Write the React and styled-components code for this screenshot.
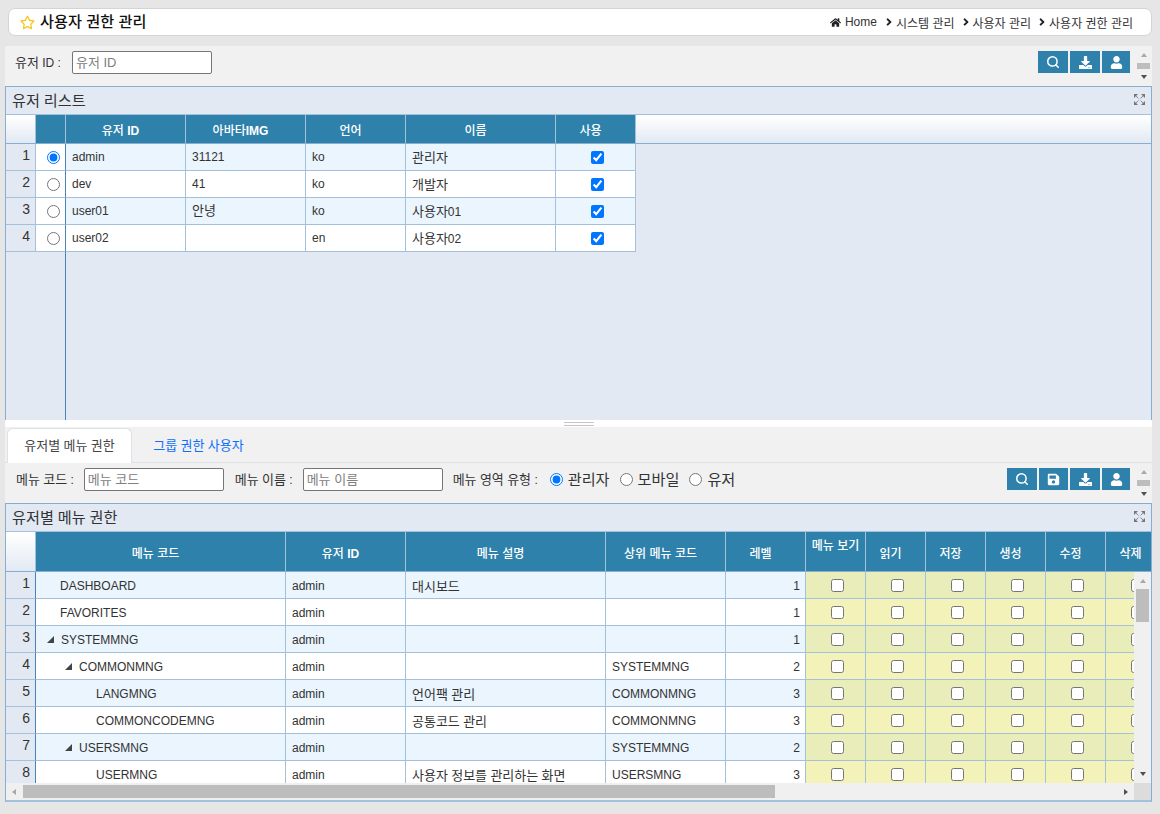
import React from 'react'
import styled, { createGlobalStyle } from 'styled-components'
import { FaHome, FaRegStar, FaDownload, FaUser, FaSave, FaAngleRight } from 'react-icons/fa'
import { FiSearch } from 'react-icons/fi'

const GlobalStyle = createGlobalStyle`
    html, body { margin: 0; padding: 0; height: 100%; overflow: hidden; }
    body {
        background: #e6e6e6;
        color: #333;
        font-family: "Liberation Sans", "Noto Sans CJK KR", sans-serif;
        font-size: 12px;
    }
    * { box-sizing: border-box; }
`

const Page = styled.div`
    width: 1160px;
    height: 814px;
    padding: 8px 8px 0 5px;
    display: flex;
    flex-direction: column;
`

const HangulRun = styled.span`
    font-size: 1.083em;
    line-height: 1;
`

// hangul in the original font runs wider than Noto at the same size
const T = ({ children }) => String(children).split(/([가-힣]+)/).map((part, i) => (
    i % 2 ? <HangulRun key={i}>{part}</HangulRun> : part
))

const TitleBar = styled.div`
    height: 28px;
    margin: 0 0 10px 3px;
    padding: 0 18px 0 11px;
    display: flex;
    align-items: center;
    justify-content: space-between;
    background: #fff;
    border: 1px solid #d4d4d4;
    border-radius: 7px;
`

const Title = styled.div`
    display: flex;
    align-items: center;
    gap: 5px;
    color: #111;
    font-size: 14px;
    font-weight: 500;
    word-spacing: 0.5px;
    svg { color: #f5c518; font-size: 15px; }
`

const Crumbs = styled.div`
    display: flex;
    align-items: center;
    color: #333;
    font-size: 12px;
`

const Crumb = styled.span`
    display: flex;
    align-items: center;
    margin-left: ${p => p.$first ? 0 : p.$wide ? '6px' : '5px'};
    svg { color: #222; font-size: ${p => p.$first ? '11px' : '12px'}; margin-right: ${p => p.$first ? '4px' : '1px'}; }
`

const SearchBar = styled.div`
    height: 40px;
    padding: 5px 1px 0 ${p => p.$left}px;
    display: flex;
    align-items: flex-start;
    background: #f1f1f1;
`

const FieldLabel = styled.label`
    height: 23px;
    line-height: 24px;
    margin-right: ${p => p.$gap || 10}px;
    white-space: nowrap;
    color: #333;
`

const TextBox = styled.input`
    width: 140px;
    height: 23px;
    margin-right: ${p => p.$gap || 11}px;
    padding: 0 3px;
    border: 1px solid #767676;
    border-radius: 2px;
    background: #fff;
    font-family: inherit;
    font-size: 13px;
    &::placeholder { color: #808080; }
`

const RadioLabel = styled.label`
    display: flex;
    align-items: center;
    height: 23px;
    margin-right: 10px;
    font-size: 14px;
    input { width: 13px; height: 13px; margin: 0 5px 0 0; }
`

const Spacer = styled.div`
    flex: 1;
`

const Buttons = styled.div`
    display: flex;
    gap: 2px;
`

const IconButton = styled.button`
    width: ${p => p.$w || 30}px;
    height: 22px;
    padding: 0;
    display: flex;
    align-items: center;
    justify-content: center;
    border: 0;
    background: #2e81ab;
    color: #fff;
    font-size: 13px;
`

const MiniScroll = styled.div`
    width: 13px;
    height: 26px;
    margin: 2px 1px 0 7px;
    display: flex;
    flex-direction: column;
    align-items: center;
    justify-content: space-between;
`

const MiniThumb = styled.div`
    width: 13px;
    height: 6px;
    background: #bdbdbd;
`

const Arrow = styled.i`
    width: 0;
    height: 0;
    border-style: solid;
    border-color: transparent;
    ${p => p.$dir === 'up' && `border-width: 0 3.5px 4px; border-bottom-color: ${p.$c};`}
    ${p => p.$dir === 'down' && `border-width: 4px 3.5px 0; border-top-color: ${p.$c};`}
    ${p => p.$dir === 'left' && `border-width: 3.5px 4px 3.5px 0; border-right-color: ${p.$c};`}
    ${p => p.$dir === 'right' && `border-width: 3.5px 0 3.5px 4px; border-left-color: ${p.$c};`}
`

const Panel = styled.div`
    height: ${p => p.$h}px;
    display: flex;
    flex-direction: column;
    border: 1px solid #87add3;
    border-bottom: ${p => p.$closed ? '2px solid #a4c1dc' : '0'};
    background: #e2e9f3;
    overflow: hidden;
`

const Caption = styled.div`
    flex: 0 0 28px;
    display: flex;
    align-items: center;
    justify-content: space-between;
    padding: 0 6px;
    background: #e2e9f3;
    color: #333;
    font-size: 14px;
    border-bottom: 1px solid #a4c1dc;
`

const Row = styled.div`
    flex: none;
    display: grid;
    width: max-content;
    grid-template-columns: ${p => p.$cols};
    height: ${p => p.$h}px;
`

const HeadWrap = styled.div`
    display: flex;
    flex: 0 0 ${p => p.$h}px;
    overflow: hidden;
    background: linear-gradient(#fff, #e2e9f3);
    border-bottom: 1px solid #87add3;
`

const Corner = styled.div`
    border-right: 1px solid #a4c1dc;
    background: linear-gradient(#fff, #e2e9f3);
`

const HeadCell = styled.div`
    display: flex;
    justify-content: center;
    align-items: ${p => p.$raised ? 'flex-start' : 'center'};
    padding: ${p => p.$raised ? '4px 0 0' : '0 10px 0 0'};
    background: #2e81ab;
    color: #fff;
    font-weight: 700;
    white-space: nowrap;
    border-right: 1px solid #a4c1dc;
`

const HeadHangul = styled.span`
    font-weight: 500;
`

const RowNumber = styled.div`
    padding: 3px 5px 0 0;
    text-align: right;
    font-size: 14px;
    line-height: 16px;
    color: #333;
    background: #e2e9f3;
    border-right: 1px solid ${p => p.$dark ? '#4a83b5' : '#a4c1dc'};
    border-bottom: 1px solid #a4c1dc;
`

const cellPadding = p => {
    if (p.$right) return '1px 5px 0 0'
    if (p.$center) return '0 0 0 4px'
    if (p.$lifted) return '0 0 1px 6px'
    if (p.$low) return '3px 0 0 6px'
    return '1px 0 0 6px'
}

const Cell = styled.div`
    display: flex;
    align-items: center;
    justify-content: ${p => p.$center ? 'center' : p.$right ? 'flex-end' : 'flex-start'};
    padding: ${cellPadding};
    padding-left: ${p => p.$indent ? `${p.$indent}px` : undefined};
    white-space: nowrap;
    color: #333;
    background: ${p => p.$yellow
        ? (p.$odd ? '#e9edb9' : '#f3f2b9')
        : (p.$odd ? '#eaf5fe' : '#fff')};
    border-right: 1px solid #a4c1dc;
    border-bottom: 1px solid #a4c1dc;
    input { width: 13px; height: 13px; margin: 0; }
`

const RadioCell = styled(Cell)`
    background: #fff;
    padding-left: 6px;
    border-right-color: #4a83b5;
`

const Gutter = styled.div`
    flex: 1;
    width: 60px;
    border-right: 1px solid #4a83b5;
`

const TreeArrow = styled.svg`
    width: 7px;
    height: 7px;
    margin-right: 7px;
    flex: none;
`

const ExpandIcon = styled.svg`
    width: 11px;
    height: 11px;
    margin: 0 0 3px 0;
    flex: none;
`

const Splitter = styled.div`
    height: 7px;
    display: flex;
    justify-content: center;
    align-items: center;
    background: #fff;
`

const Grip = styled.div`
    width: 30px;
    height: 4px;
    border-top: 1px solid #c4c4c4;
    border-bottom: 1px solid #c4c4c4;
`

const Tabs = styled.div`
    height: 36px;
    padding: 1px 0 0 2px;
    display: flex;
    background: #f1f1f1;
    border-bottom: 1px solid #dee2e6;
`

const Tab = styled.div`
    height: 35px;
    width: ${p => p.$w}px;
    display: flex;
    align-items: center;
    justify-content: center;
    border: 1px solid ${p => p.$active ? '#dee2e6' : 'transparent'};
    border-bottom: 0;
    border-radius: 6px 6px 0 0;
    background: ${p => p.$active ? '#fff' : 'transparent'};
    color: ${p => p.$active ? '#444' : '#0d6efd'};
`

const BodyArea = styled.div`
    flex: 1;
    min-height: 0;
    display: flex;
    background: #f0f0f0;
`

const BodyClip = styled.div`
    flex: 1;
    min-width: 0;
    overflow: hidden;
`

const VScroll = styled.div`
    flex: 0 0 17px;
    display: flex;
    flex-direction: column;
    align-items: center;
    background: #f0f0f0;
    padding: 7px 0;
`

const VThumb = styled.div`
    width: 13px;
    height: 33px;
    margin-top: 6px;
    background: #bdbdbd;
`

const HScrollRow = styled.div`
    flex: 0 0 17px;
    display: flex;
    align-items: center;
    padding-left: 6px;
    background: #f0f0f0;
`

const HThumb = styled.div`
    width: 752px;
    height: 13px;
    margin-left: 7px;
    background: #bdbdbd;
`

const ScrollCorner = styled.div`
    width: 17px;
    height: 17px;
    margin-left: 6px;
    background: #dcdcdc;
`

const userCols = '30px 30px 120px 120px 100px 150px 80px'
const menuCols = '30px 250px 120px 200px 120px 80px 60px 60px 60px 60px 60px 60px'

const users = [
    { id: 'admin', img: '31121', lang: 'ko', name: '관리자', on: true },
    { id: 'dev', img: '41', lang: 'ko', name: '개발자' },
    { id: 'user01', img: '안녕', lang: 'ko', name: '사용자01' },
    { id: 'user02', img: '', lang: 'en', name: '사용자02' },
]

const menus = [
    { code: 'DASHBOARD', desc: '대시보드', parent: '', level: 1, indent: 24 },
    { code: 'FAVORITES', desc: '', parent: '', level: 1, indent: 24 },
    { code: 'SYSTEMMNG', desc: '', parent: '', level: 1, indent: 11, tree: true },
    { code: 'COMMONMNG', desc: '', parent: 'SYSTEMMNG', level: 2, indent: 29, tree: true },
    { code: 'LANGMNG', desc: '언어팩 관리', parent: 'COMMONMNG', level: 3, indent: 60 },
    { code: 'COMMONCODEMNG', desc: '공통코드 관리', parent: 'COMMONMNG', level: 3, indent: 60 },
    { code: 'USERSMNG', desc: '', parent: 'SYSTEMMNG', level: 2, indent: 29, tree: true },
    { code: 'USERMNG', desc: '사용자 정보를 관리하는 화면', parent: 'USERSMNG', level: 3, indent: 60 },
]

const permissions = ['메뉴 보기', '읽기', '저장', '생성', '수정', '삭제']

const Check = ({ checked }) => <input type="checkbox" defaultChecked={checked} />

const SearchIcon = () => <FiSearch strokeWidth={2.6} size={14} />

const Expand = () => (
    <ExpandIcon viewBox="0 0 11 11">
        <g fill="#757575">
            <path d="M0 0H4L0 4ZM11 0V4L7 0ZM0 11V7L4 11ZM11 11H7L11 7Z" />
        </g>
        <path d="M2 2 4.5 4.5M9 2 6.5 4.5M2 9 4.5 6.5M9 9 6.5 6.5" stroke="#8a8a8a" fill="none" />
    </ExpandIcon>
)

const Head = ({ children, raised }) => (
    <HeadCell $raised={raised}>
        <span>
            {String(children).split(/([가-힣]+)/).map((part, i) => (
                i % 2 ? <HeadHangul key={i}>{part}</HeadHangul> : part
            ))}
        </span>
    </HeadCell>
)

export default function App() {
    return (
        <Page>
            <GlobalStyle />
            <TitleBar>
                <Title><FaRegStar /><span><T>사용자 권한 관리</T></span></Title>
                <Crumbs>
                    <Crumb $first><FaHome />Home</Crumb>
                    <Crumb $wide><FaAngleRight />시스템 관리</Crumb>
                    <Crumb><FaAngleRight />사용자 관리</Crumb>
                    <Crumb><FaAngleRight />사용자 권한 관리</Crumb>
                </Crumbs>
            </TitleBar>

            <SearchBar $left={10}>
                <FieldLabel $gap={11}><T>유저 ID :</T></FieldLabel>
                <TextBox placeholder="유저 ID" />
                <Spacer />
                <Buttons>
                    <IconButton><SearchIcon /></IconButton>
                    <IconButton><FaDownload /></IconButton>
                    <IconButton $w={28}><FaUser /></IconButton>
                </Buttons>
                <MiniScroll>
                    <Arrow $dir="up" $c="#a8a8a8" />
                    <MiniThumb />
                    <Arrow $dir="down" $c="#505050" />
                </MiniScroll>
            </SearchBar>

            <Panel $h={334}>
                <Caption><span><T>유저 리스트</T></span><Expand /></Caption>
                <HeadWrap $h={29}>
                    <Row $cols={userCols} $h={28}>
                        <Corner />
                        <HeadCell />
                        <Head>유저 ID</Head>
                        <Head>아바타IMG</Head>
                        <Head>언어</Head>
                        <Head>이름</Head>
                        <Head>사용</Head>
                    </Row>
                </HeadWrap>
                {users.map((u, i) => (
                    <Row key={u.id} $cols={userCols} $h={27}>
                        <RowNumber>{i + 1}</RowNumber>
                        <RadioCell $center>
                            <input type="radio" name="user" defaultChecked={u.on} />
                        </RadioCell>
                        <Cell $odd={i % 2 === 0} $lifted>{u.id}</Cell>
                        <Cell $odd={i % 2 === 0} $lifted><span><T>{u.img}</T></span></Cell>
                        <Cell $odd={i % 2 === 0} $lifted>{u.lang}</Cell>
                        <Cell $odd={i % 2 === 0}><span><T>{u.name}</T></span></Cell>
                        <Cell $odd={i % 2 === 0} $center><Check checked /></Cell>
                    </Row>
                ))}
                <Gutter />
            </Panel>

            <Splitter><Grip /></Splitter>

            <Tabs>
                <Tab $active $w={125}><span><T>유저별 메뉴 권한</T></span></Tab>
                <Tab $w={133}><span><T>그룹 권한 사용자</T></span></Tab>
            </Tabs>

            <SearchBar $left={11}>
                <FieldLabel><T>메뉴 코드 :</T></FieldLabel>
                <TextBox placeholder="메뉴 코드" />
                <FieldLabel><T>메뉴 이름 :</T></FieldLabel>
                <TextBox placeholder="메뉴 이름" $gap={10} />
                <FieldLabel $gap={12}><T>메뉴 영역 유형 :</T></FieldLabel>
                <RadioLabel><input type="radio" name="area" defaultChecked /><span><T>관리자</T></span></RadioLabel>
                <RadioLabel><input type="radio" name="area" /><span><T>모바일</T></span></RadioLabel>
                <RadioLabel><input type="radio" name="area" /><span><T>유저</T></span></RadioLabel>
                <Spacer />
                <Buttons>
                    <IconButton><SearchIcon /></IconButton>
                    <IconButton $w={29}><FaSave /></IconButton>
                    <IconButton><FaDownload /></IconButton>
                    <IconButton $w={28}><FaUser /></IconButton>
                </Buttons>
                <MiniScroll>
                    <Arrow $dir="up" $c="#a8a8a8" />
                    <MiniThumb />
                    <Arrow $dir="down" $c="#505050" />
                </MiniScroll>
            </SearchBar>

            <Panel $h={299} $closed>
                <Caption><span><T>유저별 메뉴 권한</T></span><Expand /></Caption>
                <HeadWrap $h={40}>
                    <Row $cols={menuCols} $h={40}>
                        <Corner />
                        <Head>메뉴 코드</Head>
                        <Head>유저 ID</Head>
                        <Head>메뉴 설명</Head>
                        <Head>상위 메뉴 코드</Head>
                        <Head>레벨</Head>
                        {permissions.map((p, i) => (
                            <Head key={p} raised={i === 0}>{p}</Head>
                        ))}
                    </Row>
                </HeadWrap>
                <BodyArea>
                    <BodyClip>
                        {menus.map((m, i) => (
                            <Row key={m.code} $cols={menuCols} $h={27}>
                                <RowNumber $dark>{i + 1}</RowNumber>
                                <Cell $odd={i % 2 === 0} $indent={m.indent}>
                                    {m.tree && (
                                        <TreeArrow viewBox="0 0 7 7">
                                            <path d="M7 0V7H0Z" fill="#444" />
                                        </TreeArrow>
                                    )}
                                    {m.code}
                                </Cell>
                                <Cell $odd={i % 2 === 0}>admin</Cell>
                                <Cell $odd={i % 2 === 0} $low><span><T>{m.desc}</T></span></Cell>
                                <Cell $odd={i % 2 === 0}>{m.parent}</Cell>
                                <Cell $odd={i % 2 === 0} $right>{m.level}</Cell>
                                {permissions.map(p => (
                                    <Cell key={p} $odd={i % 2 === 0} $yellow $center><Check /></Cell>
                                ))}
                            </Row>
                        ))}
                    </BodyClip>
                    <VScroll>
                        <Arrow $dir="up" $c="#a8a8a8" />
                        <VThumb />
                        <Spacer />
                        <Arrow $dir="down" $c="#505050" />
                    </VScroll>
                </BodyArea>
                <HScrollRow>
                    <Arrow $dir="left" $c="#a8a8a8" />
                    <HThumb />
                    <Spacer />
                    <Arrow $dir="right" $c="#505050" />
                    <ScrollCorner />
                </HScrollRow>
            </Panel>
        </Page>
    )
}
